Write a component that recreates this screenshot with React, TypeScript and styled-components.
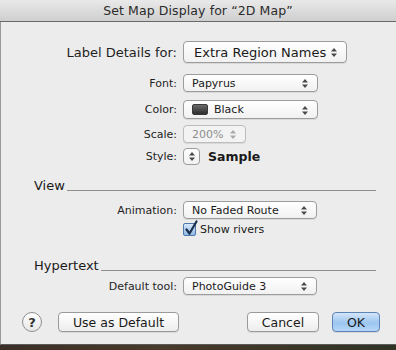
import styled, { createGlobalStyle } from 'styled-components';

const GlobalStyle = createGlobalStyle`
    html, body {
        margin: 0;
        padding: 0;
        background: #2a2420;
    }
    body {
        font-family: "DejaVu Sans", "Liberation Sans", sans-serif;
        color: #1a1a1a;
    }
`;

const Window = styled.div`
    width: 396px;
    height: 350px;
    overflow: hidden;
    display: flex;
    flex-direction: column;
    background: linear-gradient(90deg, #3b2e25, #4a3a2a 40%, #2e3324);
`;

const TitleBar = styled.div`
    height: 21px;
    flex: none;
    display: flex;
    align-items: center;
    justify-content: center;
    background: linear-gradient(#e9e9e9, #cfcfcf);
    border-bottom: 1px solid #6a6a6a;
    font-size: 12.5px;
    color: #2b2b2b;
    letter-spacing: 0.1px;
`;

const Body = styled.div`
    height: 323px;
    flex: none;
    background: #ececec;
    border-left: 1px solid #9a9a9a;
    border-bottom: 1px solid #5a5a5a;
    display: flex;
    flex-direction: column;
    padding-top: 19px;
    box-sizing: border-box;
`;

const Row = styled.div<{ $top?: number }>`
    display: grid;
    grid-template-columns: 176px auto;
    column-gap: 6px;
    align-items: center;
    margin-top: ${p => p.$top ?? 0}px;
`;

const Label = styled.div<{ $big?: boolean }>`
    text-align: right;
    font-size: ${p => (p.$big ? 13 : 11)}px;
    color: #1f1f1f;
`;

const Popup = styled.div<{ $w: number; $h?: number; $big?: boolean; $off?: boolean }>`
    position: relative;
    width: ${p => p.$w}px;
    height: ${p => p.$h ?? 18}px;
    box-sizing: border-box;
    display: flex;
    align-items: center;
    gap: 6px;
    padding-left: ${p => (p.$big ? 10 : 8)}px;
    border: 1px solid ${p => (p.$off ? '#bdbdbd' : '#9c9c9c')};
    border-radius: 4px;
    background: ${p => (p.$off ? '#f3f3f3' : 'linear-gradient(#ffffff, #f1f1f1)')};
    box-shadow: 0 1px 0 rgba(0, 0, 0, 0.08);
    font-size: ${p => (p.$big ? 13 : 11)}px;
    color: ${p => (p.$off ? '#8d8d8d' : '#1a1a1a')};
`;

const Arrows = styled.svg<{ $off?: boolean }>`
    position: absolute;
    right: 9px;
    top: 50%;
    margin-top: -4px;
    fill: ${p => (p.$off ? '#a8a8a8' : '#4a4a4a')};
`;

const Swatch = styled.span`
    width: 16px;
    height: 11px;
    border-radius: 2px;
    background: linear-gradient(#6a6a6a, #2e2e2e);
    border: 1px solid #3a3a3a;
    box-sizing: border-box;
`;

const Stepper = styled.div`
    width: 17px;
    height: 17px;
    box-sizing: border-box;
    border: 1px solid #9c9c9c;
    border-radius: 4px;
    background: linear-gradient(#ffffff, #f1f1f1);
    display: flex;
    align-items: center;
    justify-content: center;
    fill: #4a4a4a;
`;

const StyleCell = styled.div`
    display: flex;
    align-items: center;
    gap: 8px;
`;

const Sample = styled.span`
    font-weight: bold;
    font-size: 12.5px;
`;

const Section = styled.div<{ $top: number }>`
    display: flex;
    align-items: flex-end;
    gap: 2px;
    margin: ${p => p.$top}px 20px 0 33px;
    font-size: 13px;
    color: #1a1a1a;

    &:after {
        content: '';
        flex: 1;
        border-bottom: 1px solid #8f8f8f;
        margin-bottom: 2px;
    }
`;

const CheckRow = styled.label`
    display: flex;
    align-items: center;
    gap: 4px;
    font-size: 11px;
    padding-top: 2px;
`;

const Check = styled.span`
    position: relative;
    width: 13px;
    height: 13px;
    box-sizing: border-box;
    border: 1px solid #4d78a8;
    border-radius: 2px;
    background: linear-gradient(#d6e8fb, #8fb9e6);
`;

const CheckMark = styled.svg`
    position: absolute;
    left: 0;
    top: -4px;
`;

const Footer = styled.div`
    display: flex;
    align-items: center;
    margin: 17px 16px 0 21px;
`;

const Help = styled.div`
    width: 20px;
    height: 20px;
    box-sizing: border-box;
    border-radius: 50%;
    border: 1px solid #8e8e8e;
    background: linear-gradient(#ffffff, #e6e6e6);
    display: flex;
    align-items: center;
    justify-content: center;
    font-size: 13px;
    font-weight: bold;
    color: #333;
    margin-right: 16px;
`;

const Button = styled.button<{ $w: number; $primary?: boolean }>`
    width: ${p => p.$w}px;
    height: 20px;
    padding: 0;
    font-family: inherit;
    font-size: 12.5px;
    color: #1a1a1a;
    border-radius: 4px;
    border: 1px solid ${p => (p.$primary ? '#5b84b8' : '#9a9a9a')};
    background: ${p =>
        p.$primary
            ? 'linear-gradient(#d3e5f9, #9cc6f0 55%, #b4d6f7)'
            : 'linear-gradient(#ffffff, #ededed)'};
    box-shadow: 0 1px 0 rgba(0, 0, 0, 0.08);
`;

const Spacer = styled.div`
    flex: 1;
`;

const Gap = styled.div`
    width: 13px;
`;

const ArrowPath = () => <path d="M0 3.5 L3 0 L6 3.5 Z M0 5.5 L3 9 L6 5.5 Z" />;

const UpDown = ({ off }: { off?: boolean }) => (
    <Arrows $off={off} width="6" height="9" viewBox="0 0 6 9">
        <ArrowPath />
    </Arrows>
);

const App = () => (
    <Window>
        <GlobalStyle />
        <TitleBar>Set Map Display for “2D Map”</TitleBar>
        <Body>
            <Row>
                <Label $big>Label Details for:</Label>
                <Popup $w={164} $h={22} $big>
                    Extra Region Names
                    <UpDown />
                </Popup>
            </Row>
            <Row $top={11}>
                <Label>Font:</Label>
                <Popup $w={135}>
                    Papyrus
                    <UpDown />
                </Popup>
            </Row>
            <Row $top={8}>
                <Label>Color:</Label>
                <Popup $w={135} $h={19}>
                    <Swatch />
                    Black
                    <UpDown />
                </Popup>
            </Row>
            <Row $top={6}>
                <Label>Scale:</Label>
                <Popup $w={63} $off>
                    200%
                    <UpDown off />
                </Popup>
            </Row>
            <Row $top={5}>
                <Label>Style:</Label>
                <StyleCell>
                    <Stepper>
                        <svg width="6" height="9" viewBox="0 0 6 9">
                            <ArrowPath />
                        </svg>
                    </Stepper>
                    <Sample>Sample</Sample>
                </StyleCell>
            </Row>
            <Section $top={13}>View</Section>
            <Row $top={8}>
                <Label>Animation:</Label>
                <Popup $w={134}>
                    No Faded Route
                    <UpDown />
                </Popup>
            </Row>
            <Row $top={2}>
                <span />
                <CheckRow>
                    <Check>
                        <CheckMark width="14" height="17" viewBox="0 0 14 17">
                            <path d="M2.5 9.5 L5.5 13.5 L12.5 1.5" fill="none" stroke="#1c2f4a" strokeWidth="2.2" strokeLinecap="round" strokeLinejoin="round" />
                        </CheckMark>
                    </Check>
                    Show rivers
                </CheckRow>
            </Row>
            <Section $top={22}>Hypertext</Section>
            <Row $top={4}>
                <Label>Default tool:</Label>
                <Popup $w={134}>
                    PhotoGuide 3
                    <UpDown />
                </Popup>
            </Row>
            <Footer>
                <Help>?</Help>
                <Button $w={121}>Use as Default</Button>
                <Spacer />
                <Button $w={72}>Cancel</Button>
                <Gap />
                <Button $w={48} $primary>OK</Button>
            </Footer>
        </Body>
    </Window>
);

export default App;
